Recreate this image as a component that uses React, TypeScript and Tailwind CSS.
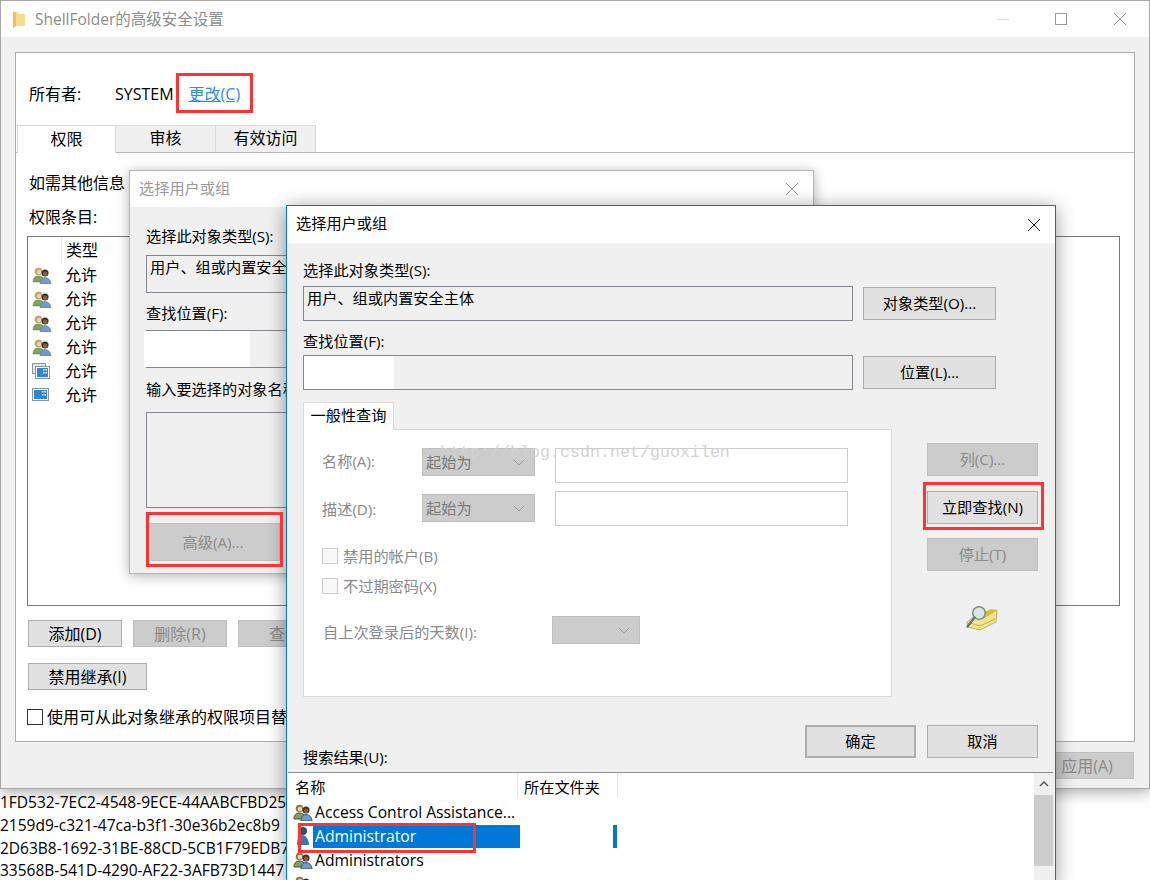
import type { ReactNode } from "react";

const FONT = "[font-family:'Open_Sans','Noto_Sans_CJK_SC',sans-serif]";

function UsersIcon({ dark }: { dark?: boolean }) {
  const line = dark ? "#3b3b2c" : "#5f7f45";
  return (
    <svg viewBox="0 0 20 17" className="h-[17px] w-[20px] shrink-0">
      <path d="M1 15c0-4 2-6 5.500-6S12 11 12 15z" fill="#7ea35c" stroke={line} strokeWidth={dark ? 0.9 : 0.5} />
      <circle cx="6.500" cy="4.500" r="3.800" fill={dark ? "#8f7a48" : "#bda56a"} />
      <circle cx="7" cy="5" r="2.300" fill="#ecd0b0" />
      <path d="M8 17c0-4 2-6.500 5-6.500s6 2.500 6 6.500z" fill="#6f9bc9" stroke={dark ? "#2f4a66" : "#4f7aa6"} strokeWidth={dark ? 0.9 : 0.5} />
      <circle cx="13" cy="6" r="3.500" fill="#3f3026" />
      <circle cx="13.200" cy="6.700" r="2.200" fill="#8a5f40" />
    </svg>
  );
}

function UserIcon() {
  return (
    <svg viewBox="0 0 20 20" className="h-5 w-5 shrink-0">
      <circle cx="10" cy="5" r="4" fill="#2d4f7c" />
      <path d="M4 19c0-6 2-10 5-10 4 0 7 5 7 10z" fill="#3f74b5" />
    </svg>
  );
}

function SystemIcon({ stacked }: { stacked?: boolean }) {
  return (
    <svg viewBox="0 0 18 16" className="h-4 w-[18px] shrink-0">
      {stacked ? <rect x="0.500" y="0.500" width="13" height="10" fill="#dbe4ee" stroke="#8a96a3" /> : null}
      <rect x={stacked ? 3.5 : 0.5} y={stacked ? 3.5 : 1.5} width={stacked ? 14 : 16} height="12" fill="#fff" stroke="#8a96a3" />
      <rect x={stacked ? 5 : 2} y={stacked ? 5 : 3} width={stacked ? 11 : 13} height="9" fill="#2f86dd" />
      <path d={stacked ? "M11 6h1.500v1.500H11zM13.500 6H15v1.500h-1.500zM11 9h1.500v1.500H11zM13.500 9H15v1.500h-1.500z" : "M10 4h1.500v1.500H10zM12.500 4H14v1.500h-1.500zM10 7h1.500v1.500H10zM12.500 7H14v1.500h-1.500z"} fill="#fff" />
    </svg>
  );
}

function FindIcon() {
  return (
    <svg viewBox="0 0 32 26" className="h-[26px] w-[32px]">
      <path d="M1 17l8-6 8 2 14-8-1 12-16 8-12-3z" fill="#f1e48e" stroke="#b8a24a" strokeWidth="0.800" />
      <path d="M16 8l9-4 6 1-9 6z" fill="#e0b83a" />
      <path d="M4 18l10 3 15-7" fill="none" stroke="#c7ae50" />
      <circle cx="13" cy="8" r="6.300" fill="#d5e8e2" stroke="#7f8c8d" strokeWidth="1.600" />
      <path d="M8.500 12.500L1.500 21.500" stroke="#6b7478" strokeWidth="2.400" strokeLinecap="round" />
    </svg>
  );
}

function FolderIcon() {
  return (
    <svg viewBox="0 0 12 17" className="h-[17px] w-3">
      <path d="M0 1h5l1 2h6v12H3l-3 2z" fill="#f8dc8e" />
      <path d="M0 1h3v14l-3 2z" fill="#ecc35c" />
    </svg>
  );
}

function CloseX({ color = "#222" }: { color?: string }) {
  return (
    <svg viewBox="0 0 12 12" className="h-3 w-3">
      <path d="M0 0l12 12M12 0L0 12" stroke={color} strokeWidth="1" fill="none" />
    </svg>
  );
}

function Chevron() {
  return (
    <svg viewBox="0 0 12 7" className="h-[7px] w-3 shrink-0">
      <path d="M1 1l5 5 5-5" stroke="#9a9a9a" strokeWidth="1" fill="none" />
    </svg>
  );
}

function Btn({ children, className = "", disabled }: { children: ReactNode; className?: string; disabled?: boolean }) {
  return (
    <div
      className={`flex shrink-0 items-center justify-center border ${
        disabled ? "border-[#bfbfbf] bg-[#cccccc] text-[#8a8a8a]" : "border-[#adadad] bg-[#e1e1e1] text-black"
      } ${className}`}
    >
      {children}
    </div>
  );
}

function Select({ label, className = "" }: { label?: string; className?: string }) {
  return (
    <div className={`flex h-[28px] shrink-0 items-center justify-between border border-[#bfbfbf] bg-[#cccccc] pl-[3px] pr-[9px] text-[#7a7a7a] ${className}`}>
      <span>{label}</span>
      <Chevron />
    </div>
  );
}

function Check({ label }: { label: string }) {
  return (
    <div className="flex h-[30px] items-center text-[#8a8a8a]">
      <span className="mr-[4px] h-[16px] w-[16px] border border-[#cccccc] bg-[#f8f8f8]" />
      <span className="ml-px">{label}</span>
    </div>
  );
}

function ResultRow({ icon, name }: { icon: ReactNode; name: ReactNode }) {
  return (
    <div className="flex h-[24px] items-center pl-[5px] text-[15.7px]">
      {icon}
      <span className="ml-[2px] mt-[2px]">{name}</span>
    </div>
  );
}

const ACES = [false, false, false, false, true, true];

function MainWindow() {
  return (
    <div className="absolute left-0 top-0 flex h-[789px] w-[1150px] flex-col border border-[#a8a8a8] bg-[#f0f0f0] text-[16px] shadow-[0_3px_14px_rgba(0,0,0,0.35)]">
      <div className="flex h-[36px] shrink-0 items-center bg-white pl-[12px]">
        <FolderIcon />
        <span className="ml-[10px] mt-[2px] text-[15.5px] text-[#8c8c8c]">ShellFolder的高级安全设置</span>
        <div className="ml-auto flex items-center pr-[23px]">
          <div className="h-px w-[12px] bg-[#dddddd]" />
          <div className="ml-[46px] h-[12px] w-[12px] border border-[#999]" />
          <div className="ml-[47px]">
            <CloseX color="#999" />
          </div>
        </div>
      </div>
      <div className="mx-[14px] mt-[15px] flex h-[690px] flex-col border border-[#adadad] bg-white">
        <div className="flex h-[72px] shrink-0 items-end pb-[19px] pl-[13px]">
          <span className="w-[86px]">所有者:</span>
          <span>SYSTEM</span>
          <span className="ml-[15px] text-[#2b8fe3] underline">更改(C)</span>
        </div>
        <div className="flex h-[28px] shrink-0 border-b border-[#b5b5b5]">
          <div className="ml-px flex h-[28px] w-[99px] items-center justify-center border-x border-t border-[#d9d9d9] bg-white pb-[2px]">权限</div>
          <div className="flex h-[27px] w-[100px] items-center justify-center border-t border-r border-[#d9d9d9] bg-[#f0f0f0] pb-[2px]">审核</div>
          <div className="flex h-[27px] w-[100px] items-center justify-center border-t border-r border-[#d9d9d9] bg-[#f0f0f0] pb-[2px]">有效访问</div>
        </div>
        <div className="mt-[19px] pl-[13px] leading-[22px]">如需其他信息</div>
        <div className="mt-[12px] pl-[13px] leading-[22px]">权限条目:</div>
        <div className="ml-[11px] mt-[8px] h-[370px] w-[1093px] border border-[#7a7a7a] pl-[4px]">
          <div className="flex h-[26px] items-start pl-[29px]">
            <span className="mr-[4px] h-full w-px bg-[#e5e5e5]" />
            <span className="leading-[26px]">类型</span>
          </div>
          {ACES.map((sys, i) => (
            <div key={i} className="flex h-[24px] items-center">
              <div className="flex w-[33px] shrink-0">{sys ? <SystemIcon stacked={i === 4} /> : <UsersIcon />}</div>
              <span>允许</span>
            </div>
          ))}
        </div>
        <div className="ml-[12px] mt-[14px] flex gap-[11px]">
          <Btn className="h-[27px] w-[94px]">添加(D)</Btn>
          <Btn disabled className="h-[27px] w-[94px]">删除(R)</Btn>
          <Btn disabled className="h-[27px] w-[94px]">查看</Btn>
        </div>
        <Btn className="ml-[12px] mt-[16px] h-[27px] w-[119px]">禁用继承(I)</Btn>
        <div className="ml-[11px] mt-[15px] flex items-center">
          <span className="mr-[4px] h-[16px] w-[16px] border border-[#333]" />
          使用可从此对象继承的权限项目替
        </div>
      </div>
      <div className="flex justify-end pr-[15px] pt-[10px]">
        <Btn disabled className="h-[27px] w-[94px]">应用(A)</Btn>
      </div>
    </div>
  );
}

function MiddleDialog() {
  return (
    <div className="absolute left-[129px] top-[170px] flex h-[404px] w-[685px] flex-col overflow-hidden border border-[#b5b5b5] bg-[#f0f0f0] text-[15.2px] shadow-[0_2px_12px_rgba(0,0,0,0.3)]">
      <div className="flex h-[36px] shrink-0 items-center justify-between bg-white pl-[9px] pr-[15px] text-[#999]">
        <span className="mt-[-2px]">选择用户或组</span>
        <CloseX color="#999" />
      </div>
      <div className="pl-[16px]">
        <div className="mt-[18px] leading-[22px]">选择此对象类型(S):</div>
        <div className="mt-[8px] flex h-[38px] w-[520px] items-start border border-[#828790] pl-[3px] leading-[22px]">用户、组或内置安全</div>
        <div className="mt-[9px] leading-[22px]">查找位置(F):</div>
        <div className="mt-[6px] h-[38px] w-[520px] border border-[#828790]">
          <div className="ml-[-3px] h-full w-[106px] bg-white" />
        </div>
        <div className="mt-[10px] leading-[22px]">输入要选择的对象名称</div>
        <div className="mt-[12px] h-[96px] w-[520px] border border-[#828790]" />
        <Btn disabled className="mt-[15px] h-[38px] w-[134px]">高级(A)...</Btn>
      </div>
    </div>
  );
}

function FrontDialog() {
  return (
    <div className="absolute left-[286px] top-[205px] flex h-[680px] w-[770px] flex-col border border-[#0078d7] bg-[#f0f0f0] text-[15.2px] shadow-[0_3px_18px_rgba(0,0,0,0.4)]">
      <div className="flex h-[37px] shrink-0 items-center justify-between bg-white pl-[9px] pr-[15px]">
        <span className="mt-[-2px]">选择用户或组</span>
        <CloseX />
      </div>
      <div className="pl-[16px]">
        <div className="mt-[16px] leading-[22px]">选择此对象类型(S):</div>
        <div className="mt-[5px] flex items-center">
          <div className="flex h-[35px] w-[550px] items-start border border-[#828790] pl-[3px] leading-[22px]">用户、组或内置安全主体</div>
          <Btn className="ml-[10px] h-[33px] w-[133px]">对象类型(O)...</Btn>
        </div>
        <div className="mt-[9px] leading-[22px]">查找位置(F):</div>
        <div className="mt-[3px] flex items-center">
          <div className="h-[35px] w-[550px] border border-[#828790]">
            <div className="h-full w-[90px] bg-white" />
          </div>
          <Btn className="ml-[10px] h-[33px] w-[133px]">位置(L)...</Btn>
        </div>
        <div className="mt-[12px] flex">
          <div className="flex w-[589px] flex-col">
            <div className="relative z-10 mb-[-1px] flex h-[28px] w-[91px] items-center justify-center border-x border-t border-[#d9d9d9] bg-white pb-[2px]">一般性查询</div>
            <div className="h-[268px] border border-[#d9d9d9] bg-white pl-[18px] text-[#8a8a8a]">
              <div className="mt-[18px] flex h-[35px]">
                <span className="w-[100px] pt-[2px]">名称(A):</span>
                <Select label="起始为" className="w-[113px]" />
                <div className="ml-[20px] h-[35px] w-[293px] border border-[#cccccc]" />
              </div>
              <div className="mt-[8px] flex h-[35px]">
                <span className="w-[100px] pt-[7px]">描述(D):</span>
                <Select label="起始为" className="mt-[3px] w-[113px]" />
                <div className="ml-[20px] h-[35px] w-[293px] border border-[#cccccc]" />
              </div>
              <div className="mt-[15px]">
                <Check label="禁用的帐户(B)" />
                <Check label="不过期密码(X)" />
              </div>
              <div className="mt-[15px] flex h-[28px] items-center">
                <span className="w-[230px] pl-px pt-[4px]">自上次登录后的天数(I):</span>
                <Select className="w-[88px] justify-end" />
              </div>
            </div>
          </div>
          <div className="ml-[35px] flex w-[111px] flex-col pt-[41px]">
            <Btn disabled className="h-[33px]">列(C)...</Btn>
            <Btn className="mt-[15px] h-[33px]">立即查找(N)</Btn>
            <Btn disabled className="mt-[14px] h-[33px]">停止(T)</Btn>
            <div className="ml-[39px] mt-[34px]">
              <FindIcon />
            </div>
          </div>
        </div>
        <div className="mt-[28px] flex justify-end gap-[11px] pr-[17px]">
          <Btn className="h-[33px] w-[111px] border-2 border-[#0078d7]">确定</Btn>
          <Btn className="h-[33px] w-[111px]">取消</Btn>
        </div>
        <div className="mt-[-12px] leading-[22px]">搜索结果(U):</div>
      </div>
      <div className="ml-px mr-[2px] mt-[4px] flex min-h-0 flex-1 border-t border-[#8a8f96] bg-white">
        <div className="min-w-0 flex-1">
          <div className="flex h-[27px] items-start">
            <span className="h-[24px] w-[229px] pl-[7px] leading-[28px]">名称</span>
            <span className="h-[24px] w-px bg-[#e5e5e5]" />
            <span className="h-[24px] w-[99px] pl-[6px] leading-[28px]">所在文件夹</span>
            <span className="h-[24px] w-px bg-[#e5e5e5]" />
          </div>
          <ResultRow icon={<UsersIcon dark />} name="Access Control Assistance..." />
          <div className="flex h-[24px] items-center pl-[5px] text-[15.7px]">
            <UserIcon />
            <span className="flex h-[23px] w-[207px] items-center bg-[#0078d7] pl-[2px] pt-[2px] text-white">Administrator</span>
            <span className="ml-[93px] h-[23px] w-[4px] bg-[#0078d7]" />
          </div>
          <ResultRow icon={<UsersIcon dark />} name="Administrators" />
          <ResultRow icon={<UsersIcon dark />} name="" />
        </div>
        <div className="flex w-[19px] shrink-0 flex-col bg-[#f0f0f0]">
          <div className="flex h-[22px] items-center justify-center">
            <svg viewBox="0 0 10 6" className="h-[6px] w-[10px]">
              <path d="M1 5l4-4 4 4" stroke="#606060" strokeWidth="1.600" fill="none" />
            </svg>
          </div>
          <div className="h-[71px] bg-[#cdcdcd]" />
        </div>
      </div>
    </div>
  );
}

export default function App() {
  return (
    <div className={`relative h-[880px] w-[1150px] overflow-hidden bg-white text-black ${FONT}`}>
      <div className="pt-[791px] text-[15.5px] leading-[23px]">
        <div>1FD532-7EC2-4548-9ECE-44AABCFBD25</div>
        <div>2159d9-c321-47ca-b3f1-30e36b2ec8b9</div>
        <div>2D63B8-1692-31BE-88CD-5CB1F79EDB7</div>
        <div className="mt-[-1px]">33568B-541D-4290-AF22-3AFB73D1447</div>
      </div>
      <MainWindow />
      <MiddleDialog />
      <FrontDialog />
      {/* red marks and the watermark lie over the windows */}
      <div className="absolute left-[176px] top-[73px] h-[40px] w-[77px] border-[3px] border-[#ff3333]" />
      <div className="absolute left-[146px] top-[512px] h-[55px] w-[137px] border-[3px] border-[#ff3333]" />
      <div className="absolute left-[923px] top-[482px] h-[48px] w-[121px] border-[3px] border-[#ff3333]" />
      <div className="absolute left-[298px] top-[823px] h-[30px] w-[178px] border-[3px] border-[#ff3333]" />
      <div className="absolute left-[440px] top-[443px] text-[16.67px] leading-[20px] text-[#d2d2d2] [font-family:'Liberation_Mono',monospace]">
        http://blog.csdn.net/guoxilen
      </div>
    </div>
  );
}
